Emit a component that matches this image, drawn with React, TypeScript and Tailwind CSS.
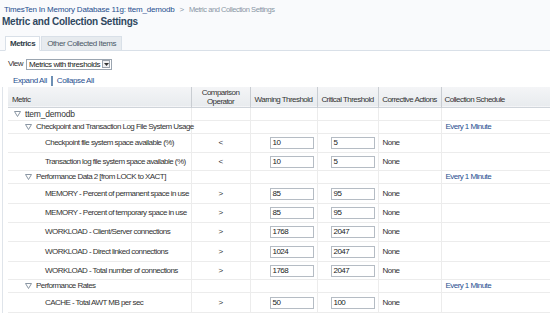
const link = "text-[#1f4f8f]";

type Row =
  | { kind: "root"; label: string }
  | { kind: "group"; label: string; schedule?: string; h?: string }
  | { kind: "leaf"; label: string; op: string; warn: string; crit: string; h: string };

const rows: Row[] = [
  { kind: "root", label: "ttem_demodb" },
  { kind: "group", label: "Checkpoint and Transaction Log File System Usage", schedule: "Every 1 Minute" },
  { kind: "leaf", label: "Checkpoint file system space available (%)", op: "<", warn: "10", crit: "5", h: "h-[19px]" },
  { kind: "leaf", label: "Transaction log file system space available (%)", op: "<", warn: "10", crit: "5", h: "h-[18px]" },
  { kind: "group", label: "Performance Data 2 [from LOCK to XACT]", schedule: "Every 1 Minute" },
  { kind: "leaf", label: "MEMORY - Percent of permanent space in use", op: ">", warn: "85", crit: "95", h: "h-[20px]" },
  { kind: "leaf", label: "MEMORY - Percent of temporary space in use", op: ">", warn: "85", crit: "95", h: "h-[19px]" },
  { kind: "leaf", label: "WORKLOAD - Client/Server connections", op: ">", warn: "1768", crit: "2047", h: "h-[19px]" },
  { kind: "leaf", label: "WORKLOAD - Direct linked connections", op: ">", warn: "1024", crit: "2047", h: "h-[20px]" },
  { kind: "leaf", label: "WORKLOAD - Total number of connections", op: ">", warn: "1768", crit: "2047", h: "h-[18px]" },
  { kind: "group", label: "Performance Rates", schedule: "Every 1 Minute" },
  { kind: "leaf", label: "CACHE - Total AWT MB per sec", op: ">", warn: "50", crit: "100", h: "h-[20px]" },
];

function Tri() {
  return (
    <svg width="7" height="6" viewBox="0 0 7 6" className="mr-[4px] shrink-0">
      <path d="M0.5 0.5 H6.5 L3.5 5.5 Z" fill="none" stroke="#8a96a3" strokeWidth="1" />
    </svg>
  );
}

function Field({ value }: { value: string }) {
  return (
    <div className="h-[12px] w-[44px] border border-[#b5bcc4] bg-white pl-[2px] text-[8px] leading-[10px] text-[#222]">
      {value}
    </div>
  );
}

const cell = "border-r border-[#ececec] p-0";

export default function App() {
  return (
    <div className="w-[550px] h-[313px] overflow-hidden bg-white font-['Liberation_Sans',sans-serif] text-[#333] text-[8px] tracking-[-0.55px] whitespace-nowrap">
      <div className="bg-[#f9fafc] border-b border-[#d9e0e8] h-[51px] pl-[4px] relative">
        <div className="pt-[5px] text-[8px] leading-[10px] tracking-[-0.2px] flex items-center">
          <span className={link}>TimesTen In Memory Database 11g: ttem_demodb</span>
          <span className="text-[#8a97a6] mx-[5px]">&gt;</span>
          <span className="text-[#8a97a6] text-[7.5px] tracking-[-0.45px]">Metric and Collection Settings</span>
        </div>
        <div className="-ml-[2px] text-[10px] leading-[13px] font-bold text-[#2f4860] tracking-[-0.25px]">
          Metric and Collection Settings
        </div>
        <div className="flex absolute left-[5px] bottom-[-1px] h-[15px]">
          <div className="bg-white border border-[#d9e0e8] border-b-white px-[4px] leading-[13px] font-bold text-[#2f3b47] tracking-[-0.4px]">
            Metrics
          </div>
          <div className="ml-[1px] bg-[#e7ebef] border border-[#d9e0e8] px-[5px] leading-[13px] text-[#4a5866] tracking-[-0.4px]">
            Other Collected Items
          </div>
        </div>
      </div>
      <div className="flex items-center pl-[8px] mt-[7px] h-[12px]">
        <span className="mr-[3px]">View</span>
        <div className="flex items-center h-[11px] border border-[#9ba5b0] bg-white">
          <span className="px-[2px] leading-[9px] text-[#222] tracking-[-0.45px]">Metrics with thresholds</span>
          <div className="h-[8px] w-[8px] mr-[1px] border border-[#9aa3ad] bg-[#eef0f2] flex items-center justify-center">
            <svg width="5" height="3" viewBox="0 0 5 3">
              <path d="M0 0 H5 L2.5 3 Z" fill="#333" />
            </svg>
          </div>
        </div>
      </div>
      <div className="flex items-center pl-[13px] mt-[6px] h-[10px] tracking-[-0.4px]">
        <span className={link}>Expand All</span>
        <span className="mx-[4px] w-[2px] h-[10px] bg-[#6d8fb4]" />
        <span className={link}>Collapse All</span>
      </div>
      <div className="flex mt-[1px]">
        <div className="w-[3px] shrink-0 border-r border-[#dfe4ea]" />
        <div className="w-[5px] shrink-0" />
        <table className="table-fixed border-collapse w-[600px]">
          <colgroup>
            <col className="w-[183px]" />
            <col className="w-[59px]" />
            <col className="w-[67px]" />
            <col className="w-[61px]" />
            <col className="w-[63px]" />
            <col className="w-[167px]" />
          </colgroup>
          <thead>
            <tr className="h-[20px] bg-[linear-gradient(#f4f5f7,#e8ebee)] border-b border-[#cfd4da] text-[#333]">
              <th className="border-r border-[#c9cdd2] text-left font-normal pl-[4px] pt-[7px] leading-[10px]">Metric</th>
              <th className="border-r border-[#c9cdd2] font-normal leading-[9px]">
                Comparison
                <br />
                Operator
              </th>
              <th className="border-r border-[#c9cdd2] font-normal pt-[7px] leading-[10px]">Warning Threshold</th>
              <th className="border-r border-[#c9cdd2] font-normal pt-[7px] leading-[10px]">Critical Threshold</th>
              <th className="border-r border-[#c9cdd2] font-normal pt-[7px] leading-[10px]">Corrective Actions</th>
              <th className="text-left font-normal pl-[3px] pt-[7px] leading-[10px]">Collection Schedule</th>
            </tr>
          </thead>
          <tbody>
            {rows.map((r, i) => {
              if (r.kind === "root" || r.kind === "group") {
                const pad = r.kind === "root" ? "pl-[6px] text-[8.5px] tracking-[-0.2px]" : "pl-[17px]";
                return (
                  <tr key={i} className="h-[13px] border-b border-[#ececec]">
                    <td className={cell}>
                      <div className={`flex items-center ${pad}`}>
                        <Tri />
                        <span>{r.label}</span>
                      </div>
                    </td>
                    <td className={cell} />
                    <td className={cell} />
                    <td className={cell} />
                    <td className={cell} />
                    <td className="p-0 pl-[4px]">
                      {r.kind === "group" && <span className={link}>{r.schedule}</span>}
                    </td>
                  </tr>
                );
              }
              return (
                <tr key={i} className={`${r.h} border-b border-[#ececec]`}>
                  <td className={`${cell} pl-[37px]`}>{r.label}</td>
                  <td className={`${cell} text-center`}>{r.op}</td>
                  <td className={cell}>
                    <div className="pl-[19px]">
                      <Field value={r.warn} />
                    </div>
                  </td>
                  <td className={cell}>
                    <div className="pl-[13px]">
                      <Field value={r.crit} />
                    </div>
                  </td>
                  <td className={`${cell} pl-[4px]`}>None</td>
                  <td className="p-0" />
                </tr>
              );
            })}
          </tbody>
        </table>
      </div>
    </div>
  );
}
